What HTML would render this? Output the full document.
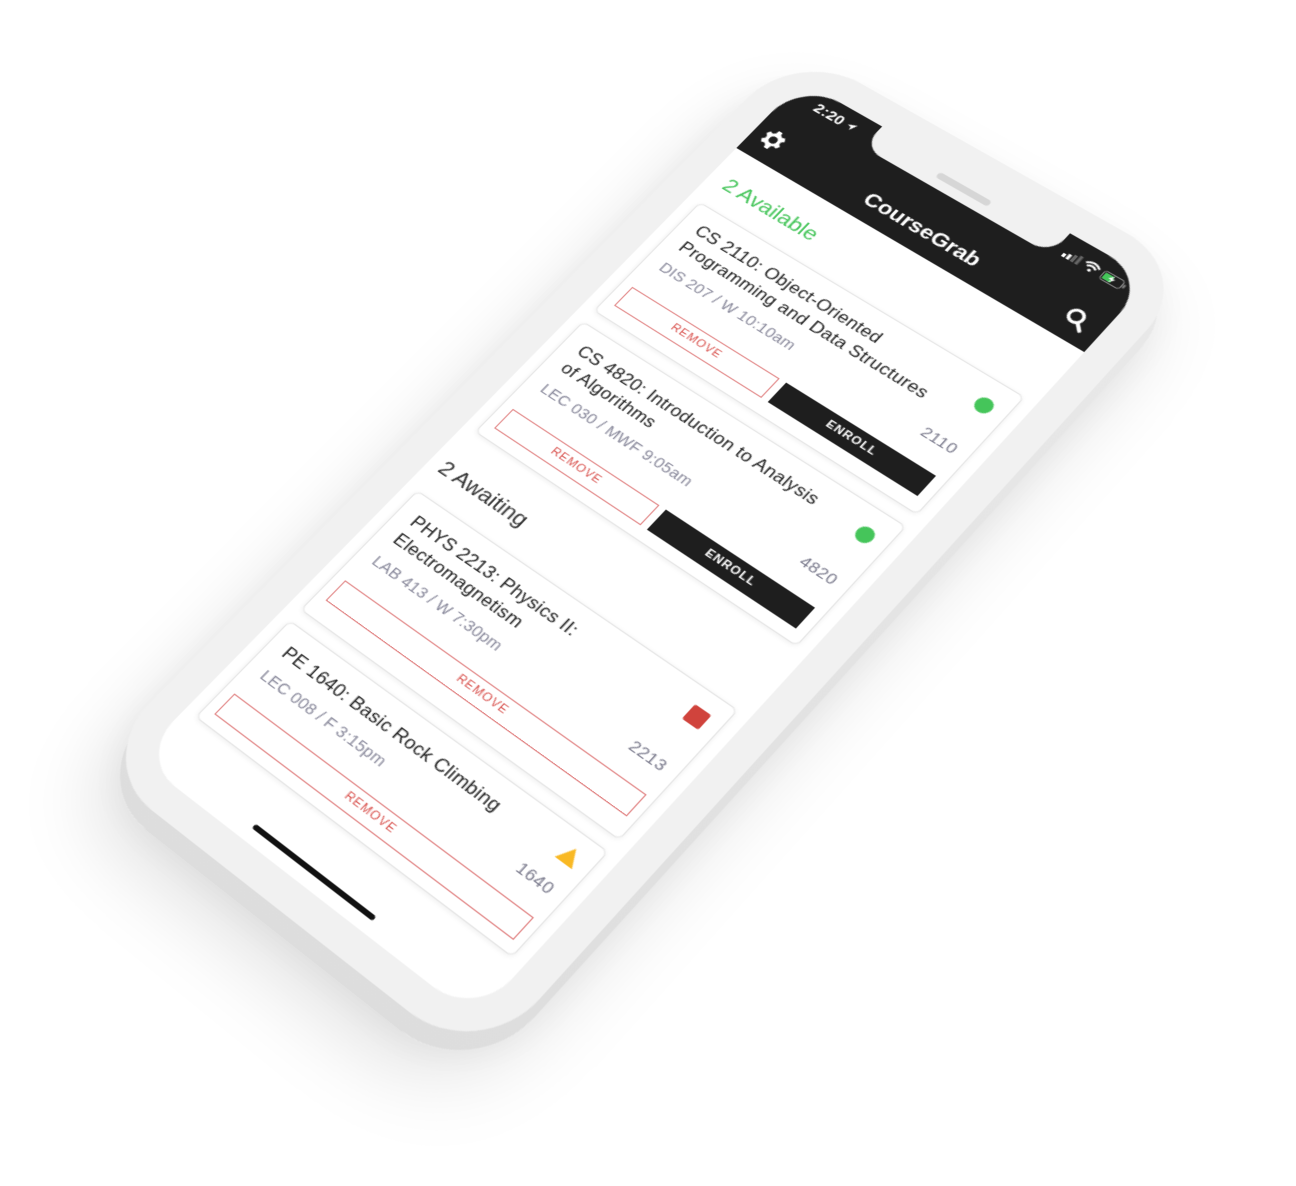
<!DOCTYPE html>
<html><head><meta charset="utf-8"><style>
html,body{margin:0;padding:0;width:1296px;height:1186px;background:#fff;overflow:hidden;font-family:"Liberation Sans",Arial,sans-serif}
#p{position:absolute;left:0;top:0;width:375px;height:880px;transform-origin:0 0;
transform:matrix3d(0.75446,0.48587,0,-0.00015223,-0.76804,0.69849,0,-0.0000927,0,0,1,0,802.17,81.05,0,1)}
#p div{position:absolute;box-sizing:border-box}
.thick{left:-21px;top:-12px;width:431px;height:936px;border-radius:74px;background:linear-gradient(180deg,#e9e9e9,#dddddd);box-shadow:0 24px 70px rgba(0,0,0,.13),0 0 40px rgba(0,0,0,.05)}
.body{left:-28px;top:-28px;width:431px;height:936px;border-radius:72px;background:#f1f1f1}
.screen{left:0;top:0;width:375px;height:880px;border-radius:44px;background:#fff;overflow:hidden}
.hdr{left:0;top:0;width:375px;height:94px;background:#1e1e1e}
.card{left:12px;width:351px;background:#fff;border:1px solid #e4e4e4;border-radius:6px;box-shadow:0 1px 5px rgba(0,0,0,.07)}
.t{left:16px;top:13px;font-size:17px;line-height:22px;letter-spacing:.3px;color:#222;white-space:nowrap}
.s{left:16px;font-size:15px;line-height:18px;color:#8a8a9c;white-space:nowrap;letter-spacing:.2px}
.rm{height:25px;border:1px solid #e07f7f;color:#d9534f;font-size:11px;line-height:23px;text-align:center;letter-spacing:1px}
.en{height:25px;background:#1e1e1e;color:#fff;font-size:11px;font-weight:bold;line-height:25px;text-align:center;letter-spacing:1px}
.num{right:12px;top:67px;font-size:15px;line-height:20px;color:#7a7a8c;letter-spacing:.5px}
.dot{left:320px;top:18px;width:16px;height:16px;border-radius:50%;background:#45c55a}
.sec{font-size:21px;line-height:24px;white-space:nowrap}
</style></head><body>
<div id="p">
  <div class="thick"></div>
  <div class="body"></div>
  <div class="screen">
    <div class="hdr"></div>
    <div style="left:90px;top:0;width:202px;height:28px;background:#f1f1f1;border-radius:0 0 20px 20px"></div>
    <div style="left:162px;top:11px;width:56px;height:7px;border-radius:4px;background:#d6d6d6"></div>
    <div style="left:28px;top:8px;color:#fff;font-size:15px;font-weight:bold;line-height:18px;letter-spacing:.3px">2:20</div>
    <svg style="position:absolute;left:63px;top:11px" width="10" height="10" viewBox="0 0 10 10"><path d="M9 1 L1 4.5 L4.6 5.4 L5.5 9 Z" fill="#fff"/></svg>
    <svg style="position:absolute;left:300px;top:12px" width="64" height="14" viewBox="0 0 64 14">
      <rect x="0" y="8" width="3" height="4" fill="#fff"/><rect x="4.5" y="6" width="3" height="6" fill="#fff"/><rect x="9" y="4" width="3" height="8" fill="#666"/><rect x="13.5" y="2" width="3" height="10" fill="#666"/>
      <path d="M21 5 Q28 -1 35 5" stroke="#fff" stroke-width="2" fill="none"/><path d="M23.5 7.5 Q28 3.5 32.5 7.5" stroke="#fff" stroke-width="2" fill="none"/><circle cx="28" cy="10.5" r="1.6" fill="#fff"/>
      <rect x="39.5" y="2.5" width="20" height="10" rx="2.5" stroke="#888" fill="none"/><rect x="41" y="4" width="9" height="7" rx="1" fill="#45c55a"/><rect x="60.5" y="5.5" width="2" height="4" fill="#888"/>
      <path d="M50 3 L46 8 L49 8 L47.5 12 L52 6.5 L49 6.5 Z" fill="#fff"/>
    </svg>
    <svg style="position:absolute;left:9px;top:56px" width="24" height="24" viewBox="0 0 24 24"><path fill="#fff" fill-rule="evenodd" d="M10 1h4l.6 3.1a8 8 0 0 1 2.2 1.3l3-1 2 3.5-2.4 2.1a8 8 0 0 1 0 2.6l2.4 2.1-2 3.5-3-1a8 8 0 0 1-2.2 1.3L14 23h-4l-.6-3.1a8 8 0 0 1-2.2-1.3l-3 1-2-3.5 2.4-2.1a8 8 0 0 1 0-2.6L2.2 8.9l2-3.5 3 1a8 8 0 0 1 2.2-1.3zM12 8a4 4 0 1 0 0 8 4 4 0 1 0 0-8z"/></svg>
    <div style="left:0;top:58px;width:375px;text-align:center;color:#fff;font-size:21px;font-weight:bold;line-height:26px">CourseGrab</div>
    <svg style="position:absolute;left:338px;top:58px" width="24" height="24" viewBox="0 0 24 24"><circle cx="10" cy="10" r="6.5" stroke="#fff" stroke-width="3" fill="none"/><path d="M15 15 L21 21" stroke="#fff" stroke-width="3.4" stroke-linecap="round"/></svg>

    <div class="sec" style="left:17px;top:119px;color:#45c55a">2 Available</div>

    <div class="card" style="top:160px;height:147px">
      <div class="t">CS 2110: Object-Oriented<br>Programming and Data Structures</div>
      <div class="s" style="top:65px">DIS 207 / W 10:10am</div>
      <div class="rm" style="top:106px;left:10px;width:164px">REMOVE</div>
      <div class="en" style="top:106px;left:181px;width:158px">ENROLL</div>
      <div class="dot"></div>
      <div class="num">2110</div>
    </div>

    <div class="card" style="top:321px;height:145px">
      <div class="t">CS 4820: Introduction to Analysis<br>of Algorithms</div>
      <div class="s" style="top:65px">LEC 030 / MWF 9:05am</div>
      <div class="rm" style="top:106px;left:10px;width:164px">REMOVE</div>
      <div class="en" style="top:106px;left:181px;width:158px">ENROLL</div>
      <div class="dot"></div>
      <div class="num">4820</div>
    </div>

    <div class="sec" style="left:12px;top:498px;color:#333">2 Awaiting</div>

    <div class="card" style="top:541px;height:150px">
      <div class="t">PHYS 2213: Physics II:<br>Electromagnetism</div>
      <div class="s" style="top:65px">LAB 413 / W 7:30pm</div>
      <div class="rm" style="top:104px;left:10px;width:331px">REMOVE</div>
      <div style="left:319px;top:16px;width:17px;height:17px;border-radius:2px;background:#d0433c"></div>
      <div class="num">2213</div>
    </div>

    <div class="card" style="top:704px;height:118px">
      <div class="t">PE 1640: Basic Rock Climbing</div>
      <div class="s" style="top:43px">LEC 008 / F 3:15pm</div>
      <div class="rm" style="top:80px;left:10px;width:331px">REMOVE</div>
      <svg style="position:absolute;left:318px;top:12px" width="20" height="18" viewBox="0 0 20 18"><path d="M10 1 L19 17 L1 17 Z" fill="#f9b924"/></svg>
      <div class="num" style="top:44px">1640</div>
    </div>

    <div style="left:121px;top:863px;width:134px;height:5px;border-radius:3px;background:#111"></div>
  </div>
</div>
</body></html>
